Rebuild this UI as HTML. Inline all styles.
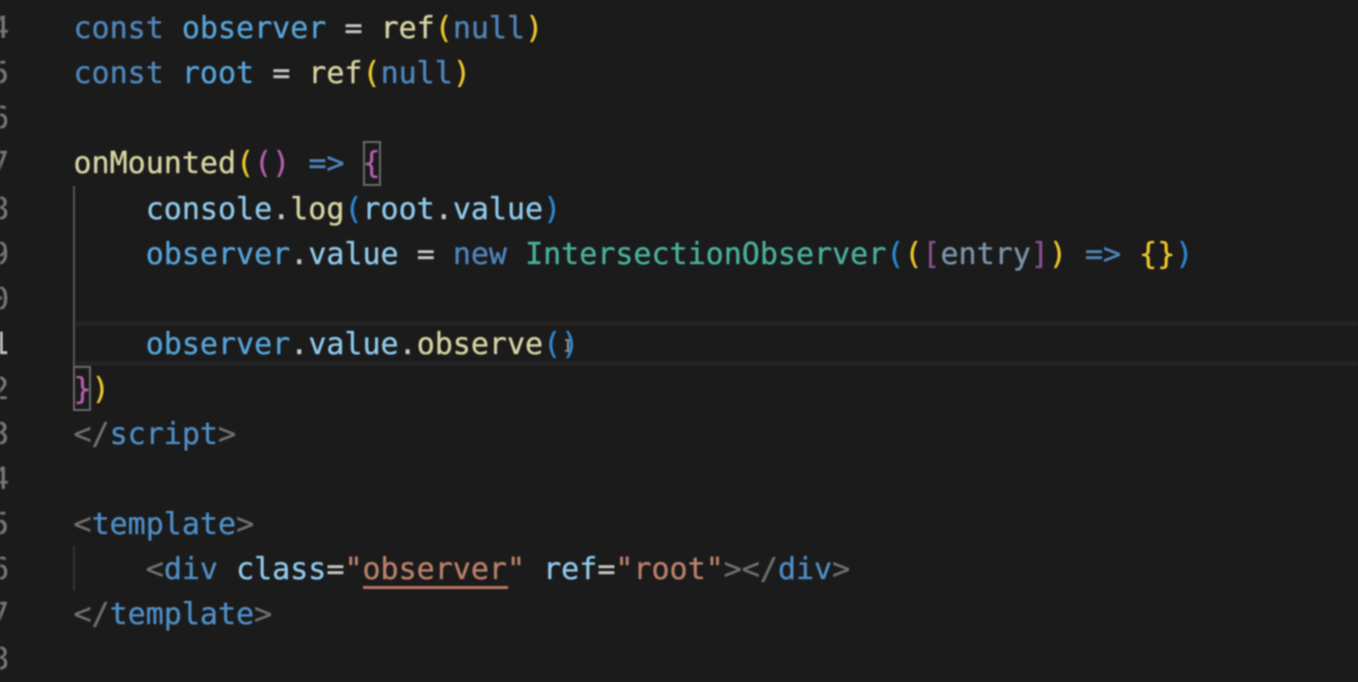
<!DOCTYPE html>
<html><head><meta charset="utf-8"><style>
html,body{margin:0;padding:0;background:#1b1b1b;width:1358px;height:682px;overflow:hidden}
#w{position:absolute;left:0;top:0;width:1358px;height:682px;overflow:hidden;filter:blur(.7px)}
pre{position:absolute;margin:0;left:73.5px;height:45px;font:30px/45px "DejaVu Sans Mono","Liberation Mono",monospace;white-space:pre;-webkit-text-stroke:.35px currentColor}
.n{left:-9px;color:#767676}
.k{color:#4f86bb}.v{color:#56a3d8}.p{color:#7fb9e0}.f{color:#d6d3a2}.y{color:#efc72a}.m{color:#b45fb0}.w{color:#c8c8c8}.g{color:#6f6f6f}.t{color:#4f8dc4}.c{color:#4ab09a}.b{color:#2f87cf}.s{color:#b9806a}.e{color:#7c93a8}.d{color:#8a4f8a}.l{color:#8fc8ea}
.box{position:absolute;border:2px solid #6a6a6a;box-sizing:border-box}
.r{position:absolute;background:#232323}
.i{position:absolute;background:#555;width:2px}
</style></head><body><div id="w">
<div class="r" style="left:76px;top:321px;width:1282px;height:5px"></div>
<div class="r" style="left:76px;top:361px;width:1282px;height:5px"></div>
<div class="i" style="left:73px;top:186px;height:180px"></div>
<div class="i" style="left:73px;top:546px;height:45px;background:#333"></div>
<div class="box" style="left:363px;top:141px;width:18px;height:45px"></div>
<div class="box" style="left:73px;top:366px;width:18px;height:45px"></div>
<div style="position:absolute;left:363px;top:586px;width:145px;height:3px;background:#b9755f"></div>
<div style="position:absolute;left:567px;top:339px;width:2px;height:13px;background:#999"></div>
<div style="position:absolute;left:565px;top:339px;width:6px;height:2px;background:#888"></div>
<div style="position:absolute;left:565px;top:350px;width:6px;height:2px;background:#888"></div>

<pre class="n" style="top:6px">4</pre>
<pre class="n" style="top:51px">5</pre>
<pre class="n" style="top:96px">6</pre>
<pre class="n" style="top:141px">7</pre>
<pre class="n" style="top:187px">8</pre>
<pre class="n" style="top:232px">9</pre>
<pre class="n" style="top:277px">0</pre>
<pre class="n" style="top:322px;color:#c4c4c4">1</pre>
<pre class="n" style="top:367px">2</pre>
<pre class="n" style="top:412px">3</pre>
<pre class="n" style="top:457px">4</pre>
<pre class="n" style="top:502px">5</pre>
<pre class="n" style="top:547px">6</pre>
<pre class="n" style="top:592px">7</pre>
<pre class="n" style="top:637px">8</pre>

<pre style="top:6px"><span class="k">const</span> <span class="v">observer</span> <span class="w">=</span> <span class="f">ref</span><span class="y">(</span><span class="k">null</span><span class="y">)</span></pre>
<pre style="top:51px"><span class="k">const</span> <span class="v">root</span> <span class="w">=</span> <span class="f">ref</span><span class="y">(</span><span class="k">null</span><span class="y">)</span></pre>
<pre style="top:141px"><span class="f">onMounted</span><span class="y">(</span><span class="m">()</span> <span class="k">=&gt;</span> <span class="m">{</span></pre>
<pre style="top:187px">    <span class="l">console</span><span class="w">.</span><span class="f">log</span><span class="b">(</span><span class="l">root</span><span class="w">.</span><span class="l">value</span><span class="b">)</span></pre>
<pre style="top:232px">    <span class="v">observer</span><span class="w">.</span><span class="l">value</span> <span class="w">=</span> <span class="k">new</span> <span class="c">IntersectionObserver</span><span class="b">(</span><span class="y">(</span><span class="d">[</span><span class="e">entry</span><span class="d">]</span><span class="y">)</span> <span class="k">=&gt;</span> <span class="y">{}</span><span class="b">)</span></pre>
<pre style="top:322px">    <span class="v">observer</span><span class="w">.</span><span class="l">value</span><span class="w">.</span><span class="f">observe</span><span class="b">()</span></pre>
<pre style="top:367px"><span class="m">}</span><span class="y">)</span></pre>
<pre style="top:412px"><span class="g">&lt;/</span><span class="t">script</span><span class="g">&gt;</span></pre>
<pre style="top:502px"><span class="g">&lt;</span><span class="t">template</span><span class="g">&gt;</span></pre>
<pre style="top:547px">    <span class="g">&lt;</span><span class="t">div</span> <span class="l">class</span><span class="w">=</span><span class="s">"observer"</span> <span class="l">ref</span><span class="w">=</span><span class="s">"root"</span><span class="g">&gt;&lt;/</span><span class="t">div</span><span class="g">&gt;</span></pre>
<pre style="top:592px"><span class="g">&lt;/</span><span class="t">template</span><span class="g">&gt;</span></pre>
</div></body></html>
